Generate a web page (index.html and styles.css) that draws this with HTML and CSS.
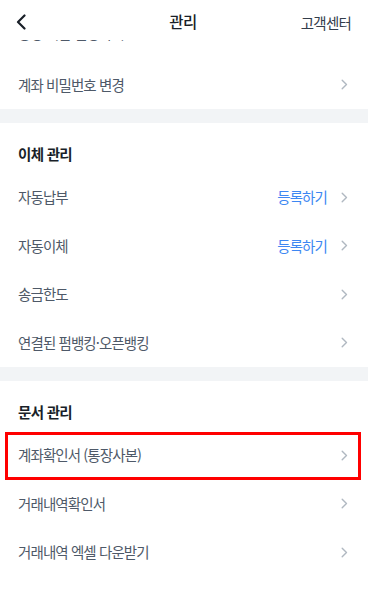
FILE: index.html
```html
<!DOCTYPE html>
<html lang="ko">
<head>
<meta charset="utf-8">
<link rel="stylesheet" href="styles.css">
</head>
<body>
<div class="page">
  <header class="topbar">
    <span class="back">
      <svg width="12" height="16" viewBox="0 0 12 16"><path d="M9.5 1.5 L3 8 L9.5 14.5" fill="none" stroke="#191f28" stroke-width="2.2" stroke-linecap="round" stroke-linejoin="round"/></svg>
    </span>
    <h1 class="title">관리</h1>
    <span class="help">고객센터</span>
  </header>
  <main class="scroll">
    <div class="list">
      <section class="group first">
        <div class="row partial"><span class="label">통장 이름 설정하기</span><span class="chev"><svg width="7" height="11" viewBox="0 0 7 11"><path d="M1.2 1.2 L5.5 5.5 L1.2 9.8" fill="none" stroke="#b0b8c1" stroke-width="1.4" stroke-linecap="round" stroke-linejoin="round"/></svg></span></div>
        <div class="row"><span class="label">계좌 비밀번호 변경</span><span class="chev"><svg width="7" height="11" viewBox="0 0 7 11"><path d="M1.2 1.2 L5.5 5.5 L1.2 9.8" fill="none" stroke="#b0b8c1" stroke-width="1.4" stroke-linecap="round" stroke-linejoin="round"/></svg></span></div>
      </section>
      <div class="band"></div>
      <section class="group">
        <h2 class="group-title">이체 관리</h2>
        <div class="row"><span class="label">자동납부</span><span class="action">등록하기</span><span class="chev"><svg width="7" height="11" viewBox="0 0 7 11"><path d="M1.2 1.2 L5.5 5.5 L1.2 9.8" fill="none" stroke="#b0b8c1" stroke-width="1.4" stroke-linecap="round" stroke-linejoin="round"/></svg></span></div>
        <div class="row"><span class="label">자동이체</span><span class="action">등록하기</span><span class="chev"><svg width="7" height="11" viewBox="0 0 7 11"><path d="M1.2 1.2 L5.5 5.5 L1.2 9.8" fill="none" stroke="#b0b8c1" stroke-width="1.4" stroke-linecap="round" stroke-linejoin="round"/></svg></span></div>
        <div class="row"><span class="label">송금한도</span><span class="chev"><svg width="7" height="11" viewBox="0 0 7 11"><path d="M1.2 1.2 L5.5 5.5 L1.2 9.8" fill="none" stroke="#b0b8c1" stroke-width="1.4" stroke-linecap="round" stroke-linejoin="round"/></svg></span></div>
        <div class="row"><span class="label">연결된 펌뱅킹·오픈뱅킹</span><span class="chev"><svg width="7" height="11" viewBox="0 0 7 11"><path d="M1.2 1.2 L5.5 5.5 L1.2 9.8" fill="none" stroke="#b0b8c1" stroke-width="1.4" stroke-linecap="round" stroke-linejoin="round"/></svg></span></div>
      </section>
      <div class="band"></div>
      <section class="group">
        <h2 class="group-title">문서 관리</h2>
        <div class="row highlight"><span class="label">계좌확인서 (통장사본)</span><span class="chev"><svg width="7" height="11" viewBox="0 0 7 11"><path d="M1.2 1.2 L5.5 5.5 L1.2 9.8" fill="none" stroke="#b0b8c1" stroke-width="1.4" stroke-linecap="round" stroke-linejoin="round"/></svg></span></div>
        <div class="row"><span class="label">거래내역확인서</span><span class="chev"><svg width="7" height="11" viewBox="0 0 7 11"><path d="M1.2 1.2 L5.5 5.5 L1.2 9.8" fill="none" stroke="#b0b8c1" stroke-width="1.4" stroke-linecap="round" stroke-linejoin="round"/></svg></span></div>
        <div class="row"><span class="label">거래내역 엑셀 다운받기</span><span class="chev"><svg width="7" height="11" viewBox="0 0 7 11"><path d="M1.2 1.2 L5.5 5.5 L1.2 9.8" fill="none" stroke="#b0b8c1" stroke-width="1.4" stroke-linecap="round" stroke-linejoin="round"/></svg></span></div>
      </section>
    </div>
  </main>
</div>
</body>
</html>
```
FILE: styles.css
```css
* { box-sizing: border-box; }
html, body {
  margin: 0;
  padding: 0;
  background: #ffffff;
}
body {
  font-family: "Noto Sans CJK KR", "Noto Sans", sans-serif;
  color: #4e5968;
}
.page {
  width: 368px;
  height: 589px;
  display: flex;
  flex-direction: column;
  overflow: hidden;
}
.topbar {
  height: 39.5px;
  flex: none;
  display: flex;
  align-items: flex-start;
  padding: 13px 17px 0 15px;
  background: #ffffff;
  position: relative;
  z-index: 2;
}
.back {
  width: 12px;
  height: 16px;
  display: flex;
  margin-top: 1px;
}
.title {
  flex: 1;
  margin: 0;
  text-align: center;
  font-size: 15.5px;
  font-weight: 500;
  color: #191f28;
  letter-spacing: -0.6px;
  padding-left: 38px;
  line-height: 16px;
}
.help {
  font-size: 14.5px;
  color: #333d4b;
  letter-spacing: -0.8px;
  line-height: 16px;
  margin-top: 2px;
}
.scroll {
  flex: 1;
  overflow: hidden;
}
.list {
  margin-top: -27.5px;
}
.band {
  height: 14px;
  background: #f2f4f6;
}
.group-title {
  margin: 0;
  height: 50px;
  padding: 20px 18px 8px;
  font-size: 14.5px;
  line-height: 22px;
  font-weight: 700;
  color: #191f28;
  letter-spacing: -0.7px;
}
.row {
  height: 48.5px;
  display: flex;
  align-items: center;
  padding: 0 20px 0 18px;
  position: relative;
}
.row.partial {
  padding-bottom: 6px;
}
.label {
  flex: 1;
  font-size: 14.5px;
  letter-spacing: -0.9px;
  color: #4e5968;
  line-height: 20px;
}
.action {
  font-size: 14.5px;
  letter-spacing: -0.9px;
  color: #3d87f2;
  line-height: 20px;
  margin-right: 14px;
}
.chev {
  width: 7px;
  height: 11px;
  display: flex;
}
.highlight::after {
  content: "";
  position: absolute;
  top: 1px;
  bottom: 0;
  left: 5px;
  right: 7px;
  border: 3px solid #ff0000;
}
```
